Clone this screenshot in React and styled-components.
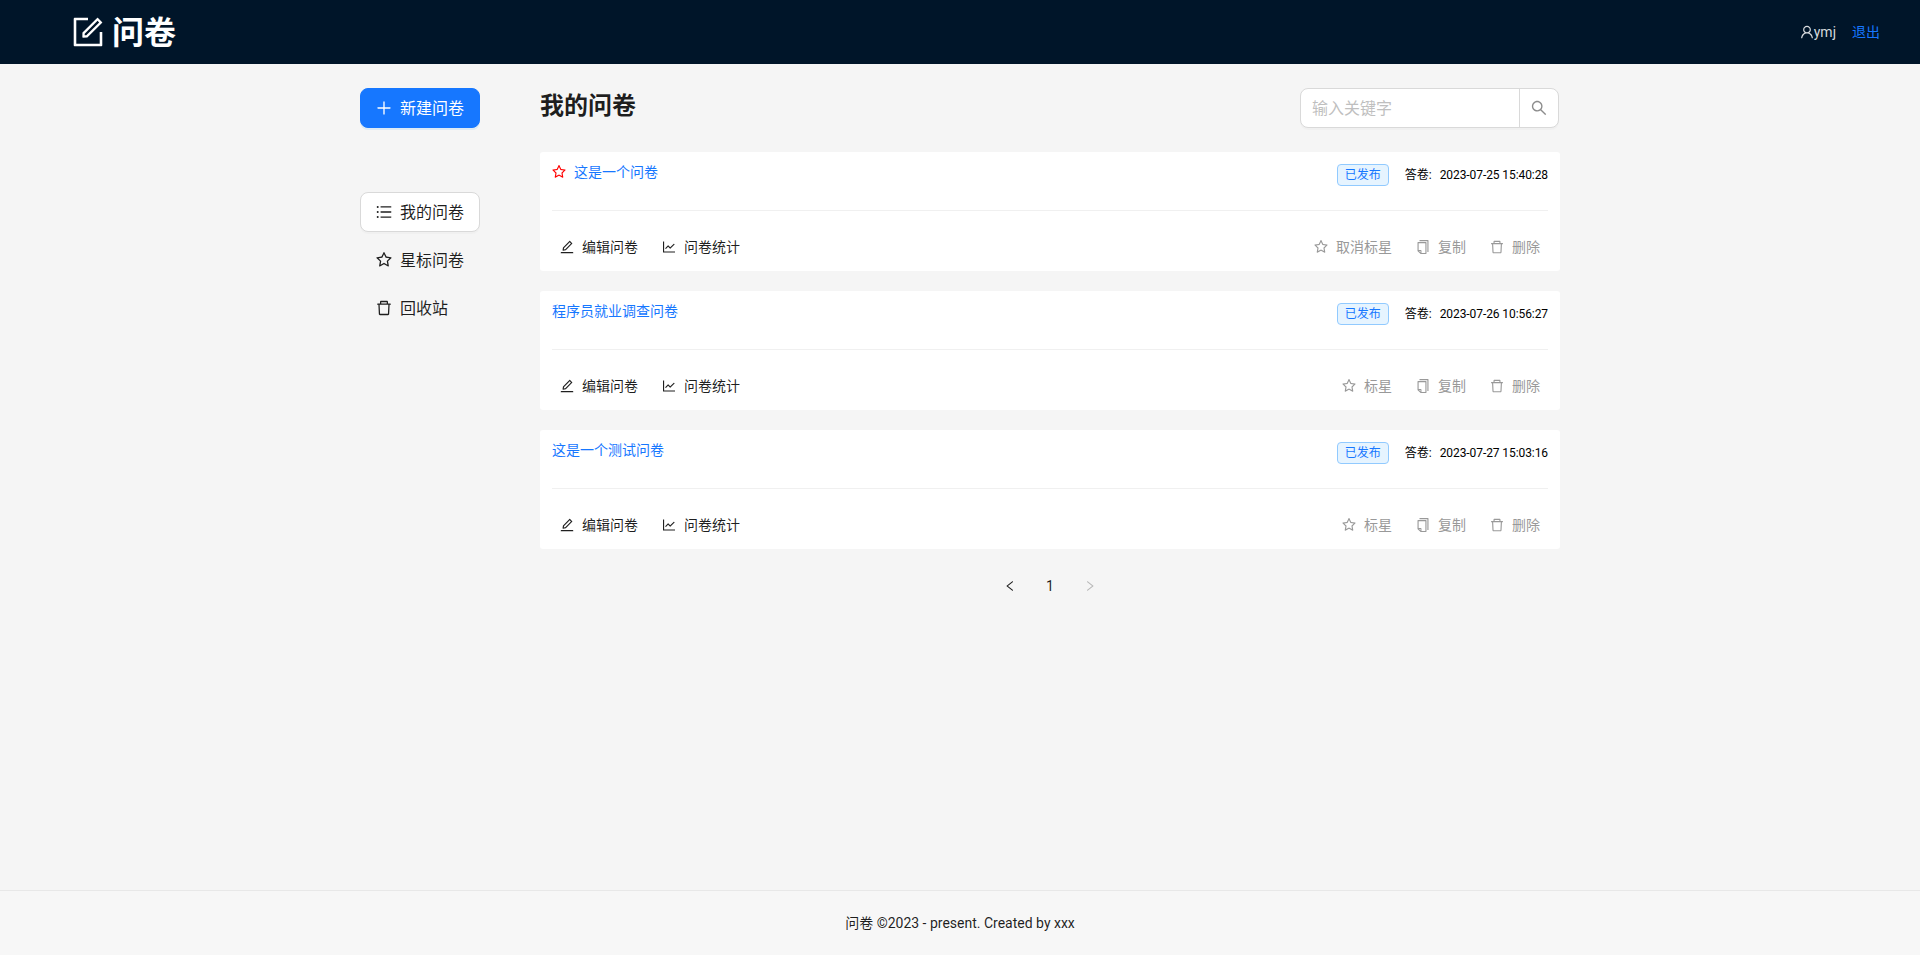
import React from 'react';
import styled, { createGlobalStyle } from 'styled-components';
import {
  AiOutlineForm,
  AiOutlineUser,
  AiOutlinePlus,
  AiOutlineUnorderedList,
  AiOutlineStar,
  AiOutlineDelete,
  AiOutlineSearch,
  AiOutlineEdit,
  AiOutlineLineChart,
  AiOutlineCopy,
  AiOutlineLeft,
  AiOutlineRight,
} from 'react-icons/ai';

// the ant design glyphs only fill this part of their 1024 box
const box = '64 64 896 896';

const GlobalStyle = createGlobalStyle`
  * {
    box-sizing: border-box;
  }
  html, body {
    margin: 0;
    padding: 0;
  }
  body {
    background: #f5f5f5;
    color: rgba(0, 0, 0, 0.88);
    font-family: Roboto, "Noto Sans CJK SC", sans-serif;
    font-size: 14px;
  }
`;

const Page = styled.div`
  display: flex;
  flex-direction: column;
  min-height: 100vh;
`;

const Header = styled.header`
  display: flex;
  align-items: center;
  justify-content: space-between;
  height: 64px;
  padding: 0 40px 0 72px;
  background: #001529;
`;

const Logo = styled.div`
  display: flex;
  align-items: center;
  gap: 8px;
  color: #fff;
  font-size: 32px;
  font-weight: 700;
  line-height: 64px;
`;

const LogoText = styled.span`
  padding-top: 2px;
`;

const UserBox = styled.div`
  display: flex;
  align-items: center;
  gap: 16px;
  line-height: 22px;
`;

const UserName = styled.span`
  display: flex;
  align-items: center;
  color: rgba(255, 255, 255, 0.85);
`;

const Logout = styled.a`
  color: #1677ff;
`;

const Main = styled.main`
  display: flex;
  flex: 1;
  width: 1200px;
  margin: 0 auto;
  padding-top: 24px;
`;

const Sider = styled.aside`
  display: flex;
  flex-direction: column;
  gap: 8px;
  flex: none;
  width: 120px;
  margin-right: 60px;
`;

const SideButton = styled.button`
  display: flex;
  align-items: center;
  gap: 8px;
  height: 40px;
  padding: 0 15px;
  margin-bottom: ${(p) => (p.$primary ? '56px' : '0')};
  border: 1px solid ${(p) => (p.$primary ? '#1677ff' : p.$active ? '#d9d9d9' : 'transparent')};
  border-radius: 8px;
  background: ${(p) => (p.$primary ? '#1677ff' : p.$active ? '#fff' : 'transparent')};
  box-shadow: ${(p) => (p.$primary ? '0 2px 0 rgba(5, 145, 255, 0.1)' : p.$active ? '0 2px 0 rgba(0, 0, 0, 0.02)' : 'none')};
  color: ${(p) => (p.$primary ? '#fff' : 'rgba(0, 0, 0, 0.88)')};
  font-family: inherit;
  font-size: 16px;
  white-space: nowrap;
`;

// CJK text sits a touch low in its line box, this lifts it 1px
const Label = styled.span`
  margin-bottom: 2px;
`;

const Content = styled.section`
  flex: 1;
  min-width: 0;
`;

const TopBar = styled.div`
  display: flex;
  align-items: flex-start;
  justify-content: space-between;
  height: 40px;
  margin-bottom: 24px;
`;

const Title = styled.h3`
  margin: 0;
  font-size: 24px;
  font-weight: 700;
  line-height: 36px;
`;

const Search = styled.div`
  display: flex;
  width: 259px;
  height: 40px;
  margin-right: 1px;
  border: 1px solid #d9d9d9;
  border-radius: 8px;
  background: #fff;
  box-shadow: 0 2px 0 rgba(0, 0, 0, 0.02);
`;

const SearchInput = styled.input`
  flex: 1;
  min-width: 0;
  padding: 0 11px;
  border: 0;
  border-radius: 8px 0 0 8px;
  outline: 0;
  background: transparent;
  font-family: inherit;
  font-size: 16px;
  &::placeholder {
    color: #bfbfbf;
    opacity: 1;
  }
`;

const SearchButton = styled.button`
  display: flex;
  align-items: center;
  justify-content: center;
  flex: none;
  width: 39px;
  padding: 0;
  border: 0;
  border-left: 1px solid #d9d9d9;
  background: transparent;
  color: rgba(0, 0, 0, 0.45);
  font-size: 16px;
`;

const Card = styled.article`
  height: 119px;
  margin-bottom: 20px;
  padding: 12px 12px 8px;
  border-radius: 3px;
  background: #fff;
`;

const CardTop = styled.div`
  display: flex;
  align-items: flex-start;
  justify-content: space-between;
  height: 22px;
`;

const CardTitle = styled.a`
  display: flex;
  align-items: center;
  gap: 8px;
  color: #1677ff;
  line-height: 16px;
`;

const Meta = styled.div`
  display: flex;
  align-items: center;
  color: #000;
  font-size: 12px;
  line-height: 22px;
`;

const Tag = styled.span`
  width: 52px;
  height: 22px;
  margin-right: 16px;
  border: 1px solid #91caff;
  border-radius: 4px;
  background: #e6f4ff;
  color: #1677ff;
  line-height: 20px;
  text-align: center;
`;

const AnswerLabel = styled.span`
  margin-right: 8px;
`;

const AnswerDate = styled.span`
  letter-spacing: -0.08px;
`;

const Divider = styled.hr`
  height: 1px;
  margin: 24px 0 20px;
  border: 0;
  background: #f0f0f0;
`;

const Actions = styled.div`
  display: flex;
  justify-content: space-between;
`;

const ActionGroup = styled.div`
  display: flex;
  gap: 8px;
`;

const ActionButton = styled.button`
  display: flex;
  align-items: center;
  gap: 8px;
  height: 32px;
  padding: 0 8px;
  border: 0;
  background: transparent;
  color: ${(p) => (p.$muted ? '#999' : 'rgba(0, 0, 0, 0.88)')};
  font-family: inherit;
  font-size: 14px;
  white-space: nowrap;
`;

const Pager = styled.nav`
  display: flex;
  justify-content: center;
  gap: 8px;
  padding-top: 1px;
`;

const PageItem = styled.span`
  display: flex;
  align-items: center;
  justify-content: center;
  width: 32px;
  height: 32px;
  color: ${(p) => (p.$disabled ? 'rgba(0, 0, 0, 0.25)' : 'rgba(0, 0, 0, 0.88)')};
  font-size: ${(p) => (p.$icon ? '12px' : '14px')};
`;

const Footer = styled.footer`
  height: 65px;
  border-top: 1px solid #e8e8e8;
  background: #f7f7f7;
  line-height: 64px;
  text-align: center;
`;

const surveys = [
  { id: 1, title: '这是一个问卷', starred: true, date: '2023-07-25 15:40:28' },
  { id: 2, title: '程序员就业调查问卷', starred: false, date: '2023-07-26 10:56:27' },
  { id: 3, title: '这是一个测试问卷', starred: false, date: '2023-07-27 15:03:16' },
];

const SurveyCard = ({ survey }) => (
  <Card>
    <CardTop>
      <CardTitle>
        {survey.starred && <AiOutlineStar size={14} viewBox={box} color="#ff0000" />}
        {survey.title}
      </CardTitle>
      <Meta>
        <Tag>已发布</Tag>
        <AnswerLabel>答卷:</AnswerLabel>
        <AnswerDate>{survey.date}</AnswerDate>
      </Meta>
    </CardTop>
    <Divider />
    <Actions>
      <ActionGroup>
        <ActionButton><AiOutlineEdit size={14} viewBox={box} /><Label>编辑问卷</Label></ActionButton>
        <ActionButton><AiOutlineLineChart size={14} viewBox={box} /><Label>问卷统计</Label></ActionButton>
      </ActionGroup>
      <ActionGroup>
        <ActionButton $muted><AiOutlineStar size={14} viewBox={box} /><Label>{survey.starred ? '取消标星' : '标星'}</Label></ActionButton>
        <ActionButton $muted><AiOutlineCopy size={14} viewBox={box} /><Label>复制</Label></ActionButton>
        <ActionButton $muted><AiOutlineDelete size={14} viewBox={box} /><Label>删除</Label></ActionButton>
      </ActionGroup>
    </Actions>
  </Card>
);

const App = () => {
  return (
    <Page>
      <GlobalStyle />
      <Header>
        <Logo><AiOutlineForm size={32} viewBox={box} /><LogoText>问卷</LogoText></Logo>
        <UserBox>
          <UserName><AiOutlineUser size={14} viewBox={box} />ymj</UserName>
          <Logout>退出</Logout>
        </UserBox>
      </Header>
      <Main>
        <Sider>
          <SideButton $primary><AiOutlinePlus size={16} viewBox={box} /><Label>新建问卷</Label></SideButton>
          <SideButton $active><AiOutlineUnorderedList size={16} viewBox={box} /><Label>我的问卷</Label></SideButton>
          <SideButton><AiOutlineStar size={16} viewBox={box} /><Label>星标问卷</Label></SideButton>
          <SideButton><AiOutlineDelete size={16} viewBox={box} /><Label>回收站</Label></SideButton>
        </Sider>
        <Content>
          <TopBar>
            <Title>我的问卷</Title>
            <Search>
              <SearchInput placeholder="输入关键字" />
              <SearchButton><AiOutlineSearch viewBox={box} /></SearchButton>
            </Search>
          </TopBar>
          {surveys.map((survey) => (
            <SurveyCard key={survey.id} survey={survey} />
          ))}
          <Pager>
            <PageItem $icon><AiOutlineLeft viewBox={box} /></PageItem>
            <PageItem>1</PageItem>
            <PageItem $icon $disabled><AiOutlineRight viewBox={box} /></PageItem>
          </Pager>
        </Content>
      </Main>
      <Footer>问卷 ©2023 - present. Created by xxx</Footer>
    </Page>
  );
};

export default App;
